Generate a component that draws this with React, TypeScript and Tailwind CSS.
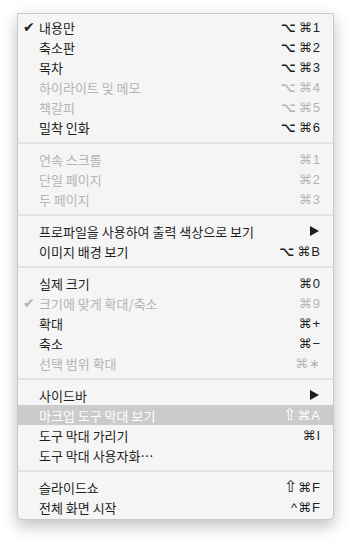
import React from 'react';

type Item = {
  label: string;
  key?: string;
  disabled?: boolean;
  checked?: boolean;
  submenu?: boolean;
  active?: boolean;
};

const groups: Item[][] = [
  [
    { label: '내용만', key: '⌥⌘1', checked: true },
    { label: '축소판', key: '⌥⌘2' },
    { label: '목차', key: '⌥⌘3' },
    { label: '하이라이트 및 메모', key: '⌥⌘4', disabled: true },
    { label: '책갈피', key: '⌥⌘5', disabled: true },
    { label: '밀착 인화', key: '⌥⌘6' },
  ],
  [
    { label: '연속 스크롤', key: '⌘1', disabled: true },
    { label: '단일 페이지', key: '⌘2', disabled: true },
    { label: '두 페이지', key: '⌘3', disabled: true },
  ],
  [
    { label: '프로파일을 사용하여 출력 색상으로 보기', submenu: true },
    { label: '이미지 배경 보기', key: '⌥⌘B' },
  ],
  [
    { label: '실제 크기', key: '⌘0' },
    { label: '크기에 맞게 확대/축소', key: '⌘9', disabled: true, checked: true },
    { label: '확대', key: '⌘+' },
    { label: '축소', key: '⌘−' },
    { label: '선택 범위 확대', key: '⌘∗', disabled: true },
  ],
  [
    { label: '사이드바', submenu: true },
    { label: '마크업 도구 막대 보기', key: '⇧⌘A', active: true },
    { label: '도구 막대 가리기', key: '⌘I' },
    { label: '도구 막대 사용자화…' },
  ],
  [
    { label: '슬라이드쇼', key: '⇧⌘F' },
    { label: '전체 화면 시작', key: '^⌘F' },
  ],
];

const Row = ({ item }: { item: Item }) => {
  const color = item.active
    ? 'text-white bg-[#cbcbcb]'
    : item.disabled
      ? 'text-[#b4b4b4]'
      : 'text-[#1e1e1e]';
  return (
    <div className={`flex h-[20px] items-center pl-[5px] pr-[13px] ${color}`}>
      <span className="w-[16px] text-[14px] leading-none font-['DejaVu_Sans',sans-serif]">
        {item.checked ? '✔' : ''}
      </span>
      <span className="flex-1 text-[13px] leading-none font-['Noto_Sans_CJK_KR','Noto_Sans',sans-serif]">
        {item.label}
      </span>
      {item.key && (
        <span className="flex items-center gap-[1px] text-[13px] leading-none font-['Liberation_Sans','DejaVu_Sans',sans-serif]">
          {item.key.split('').map((c, i) =>
            c === '⇧' ? (
              <span key={i} className="text-[16px] font-['DejaVu_Sans',sans-serif]">⇧</span>
            ) : c === '⌥' ? (
              <span key={i} className="font-bold font-['DejaVu_Sans',sans-serif] mr-[2px]">⌥</span>
            ) : (
              <span key={i}>{c}</span>
            )
          )}
        </span>
      )}
      {item.submenu && (
        <svg width="9" height="10" viewBox="0 0 9 10" className="mr-[1px]">
          <polygon points="0,0 9,5 0,10" fill="#1e1e1e" />
        </svg>
      )}
    </div>
  );
};

export default function App() {
  return (
    <div className="min-h-screen bg-white pt-[13px] pl-[17px]">
      <div className="w-[317px] h-[507px] bg-[#f5f5f5] border border-[#c9c9c9] rounded-b-[5px] shadow-[0_6px_16px_rgba(0,0,0,0.25)] pt-[3px] pb-[2px] overflow-hidden">
        {groups.map((g, gi) => (
          <div key={gi}>
            {gi > 0 && (
              <div className="h-[12px] flex items-center">
                <div className="w-full h-[2px] bg-[#e3e3e3]" />
              </div>
            )}
            {g.map((item) => (
              <Row key={item.label} item={item} />
            ))}
          </div>
        ))}
      </div>
    </div>
  );
}
